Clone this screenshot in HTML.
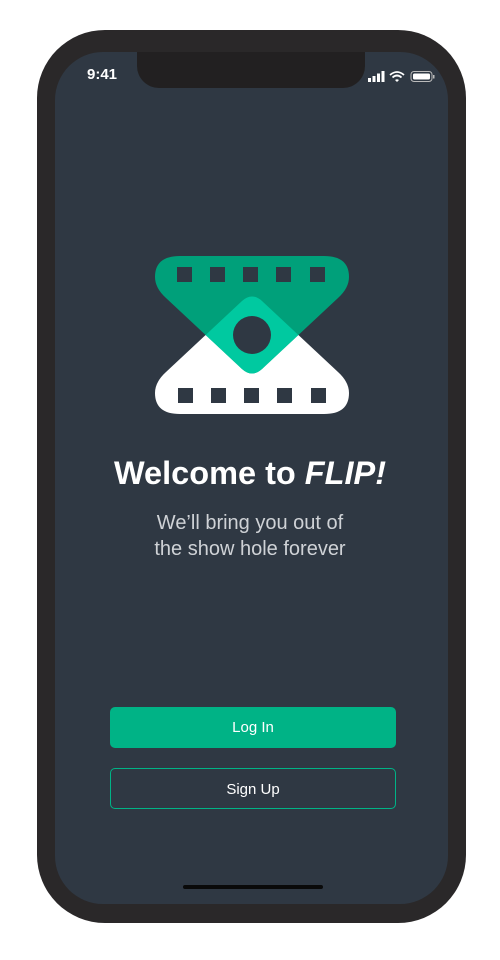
<!DOCTYPE html>
<html><head><style>
html,body{margin:0;padding:0;background:#fff;width:500px;height:960px;overflow:hidden;font-family:"Liberation Sans",sans-serif}
.phone{position:absolute;left:37px;top:30px;width:429px;height:893px;border-radius:68px;background:#2a2829;}
.screen{position:absolute;left:55px;top:52px;width:393px;height:852px;border-radius:48px;background:#2f3843;overflow:hidden}
.notch{position:absolute;left:82px;top:-2px;width:228px;height:38px;background:#222021;border-radius:0 0 22px 22px}
.time{position:absolute;left:32px;top:14px;color:#fff;font-size:15px;font-weight:bold}
.t{position:absolute;left:0;width:500px;text-align:center;color:#fff}
.btn{position:absolute;left:110px;width:286px;height:41px;border-radius:5px;box-sizing:border-box;color:#fff;font-size:15px;text-align:center;line-height:41px}
</style></head><body>
<div class="phone"></div>
<div class="screen">
<div class="notch"></div>
<div class="time">9:41</div>
<svg style="position:absolute;left:313px;top:18px" width="70" height="14" viewBox="0 0 70 14">
<rect x="0" y="8" width="3" height="4" fill="#fff"/><rect x="4.5" y="6" width="3" height="6" fill="#fff"/><rect x="9" y="3.5" width="3" height="8.5" fill="#fff"/><rect x="13.5" y="1" width="3" height="11" fill="#fff"/>
<path d="M22 5 Q29 -1 36 5 M24.5 7.5 Q29 3.5 33.5 7.5" stroke="#fff" stroke-width="1.8" fill="none"/><path d="M27 10 L29 12 L31 10 Q29 8.5 27 10Z" fill="#fff"/>
<rect x="43" y="1.5" width="21" height="10" rx="3" stroke="#bbb" stroke-width="1" fill="none"/><rect x="45" y="3.5" width="17" height="6" rx="1.5" fill="#fff"/><rect x="65" y="5" width="1.5" height="3.5" fill="#bbb"/>
</svg>
</div>
<svg style="position:absolute;left:0;top:0" width="500" height="960">
<defs>
<path id="top" d="M180 256 L324 256 Q349 256 349 277 Q349 288 338 298 L262 369 Q252 378 242 369 L166 298 Q155 288 155 277 Q155 256 180 256 Z"/>
<path id="bot" d="M180 414 L324 414 Q349 414 349 393 Q349 382 338 372 L262 301 Q252 292 242 301 L166 372 Q155 382 155 393 Q155 414 180 414 Z"/>
<clipPath id="c"><use href="#top"/></clipPath>
</defs>
<use href="#bot" fill="#fff"/>
<use href="#top" fill="#00a07a"/>
<use href="#bot" fill="#00c9a0" clip-path="url(#c)"/>
<circle cx="252" cy="335" r="19" fill="#2f3843"/>
<g fill="#2f3843">
<rect x="177" y="267" width="15" height="15"/><rect x="210" y="267" width="15" height="15"/><rect x="243" y="267" width="15" height="15"/><rect x="276" y="267" width="15" height="15"/><rect x="310" y="267" width="15" height="15"/>
<rect x="178" y="388" width="15" height="15"/><rect x="211" y="388" width="15" height="15"/><rect x="244" y="388" width="15" height="15"/><rect x="277" y="388" width="15" height="15"/><rect x="311" y="388" width="15" height="15"/>
</g>
</svg>
<div class="t" style="top:455px;font-size:32.5px;font-weight:bold;letter-spacing:0px">Welcome to <i>FLIP!</i></div>
<div class="t" style="top:510px;font-size:20px;line-height:26px;color:#cfd2d6">We’ll bring you out of<br>the show hole forever</div>
<div class="btn" style="top:707px;background:#00b386">Log In</div>
<div class="btn" style="top:768px;border:1px solid #00b386">Sign Up</div>
<div style="position:absolute;left:183px;top:885px;width:140px;height:4px;border-radius:2px;background:#0a0a0a"></div>
</body></html>
